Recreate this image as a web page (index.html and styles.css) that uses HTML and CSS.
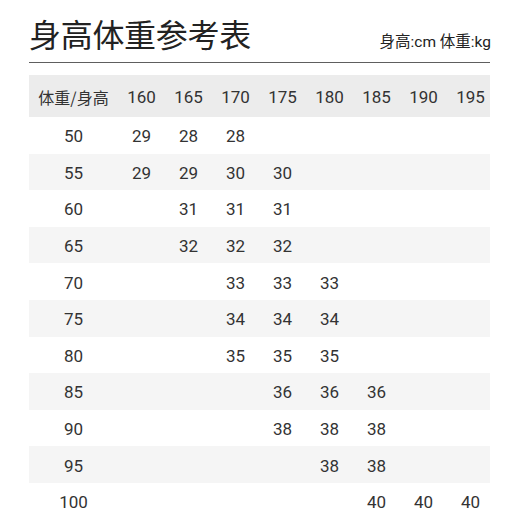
FILE: index.html
```html
<!DOCTYPE html>
<html lang="zh">
<head>
<meta charset="utf-8">
<link rel="stylesheet" href="styles.css">
</head>
<body>
<div class="page">
  <div class="head">
    <h1 class="title">身高体重参考表</h1>
    <div class="unit">身高:cm 体重:kg</div>
  </div>
  <div class="rule"></div>
  <div class="table">
    <div class="row hdr"><span class="c1">体重/身高</span><span>160</span><span>165</span><span>170</span><span>175</span><span>180</span><span>185</span><span>190</span><span>195</span></div>
    <div class="row"><span class="c1">50</span><span>29</span><span>28</span><span>28</span><span></span><span></span><span></span><span></span><span></span></div>
    <div class="row alt"><span class="c1">55</span><span>29</span><span>29</span><span>30</span><span>30</span><span></span><span></span><span></span><span></span></div>
    <div class="row"><span class="c1">60</span><span></span><span>31</span><span>31</span><span>31</span><span></span><span></span><span></span><span></span></div>
    <div class="row alt"><span class="c1">65</span><span></span><span>32</span><span>32</span><span>32</span><span></span><span></span><span></span><span></span></div>
    <div class="row"><span class="c1">70</span><span></span><span></span><span>33</span><span>33</span><span>33</span><span></span><span></span><span></span></div>
    <div class="row alt"><span class="c1">75</span><span></span><span></span><span>34</span><span>34</span><span>34</span><span></span><span></span><span></span></div>
    <div class="row"><span class="c1">80</span><span></span><span></span><span>35</span><span>35</span><span>35</span><span></span><span></span><span></span></div>
    <div class="row alt"><span class="c1">85</span><span></span><span></span><span></span><span>36</span><span>36</span><span>36</span><span></span><span></span></div>
    <div class="row"><span class="c1">90</span><span></span><span></span><span></span><span>38</span><span>38</span><span>38</span><span></span><span></span></div>
    <div class="row alt"><span class="c1">95</span><span></span><span></span><span></span><span></span><span>38</span><span>38</span><span></span><span></span></div>
    <div class="row"><span class="c1">100</span><span></span><span></span><span></span><span></span><span></span><span>40</span><span>40</span><span>40</span></div>
  </div>
</div>
</body>
</html>
```
FILE: styles.css
```css
html, body {
  margin: 0;
  padding: 0;
  background: #ffffff;
}
body {
  font-family: Roboto, "Noto Sans CJK SC", sans-serif;
  color: #333333;
  overflow: hidden;
}
.page {
  width: 461px;
  padding: 0 0 0 29px;
}
.head {
  display: flex;
  justify-content: space-between;
  align-items: flex-end;
  height: 54px;
}
.title {
  margin: 0;
  font-family: "Noto Sans CJK SC", sans-serif;
  font-weight: 400;
  font-size: 32px;
  line-height: 32px;
  color: #222222;
  letter-spacing: -0.3px;
  padding-bottom: 5px;
}
.unit {
  font-family: Roboto, "Noto Sans CJK SC", sans-serif;
  font-size: 15.5px;
  line-height: 15px;
  color: #222222;
  padding-bottom: 4px;
  margin-right: -1px;
}
.rule {
  height: 1px;
  background: #5e5e5e;
  margin-top: 8px;
}
.table {
  margin-top: 12px;
}
.row {
  display: grid;
  grid-template-columns: 89px repeat(8, 47px);
  align-items: center;
  height: 36.6px;
  font-size: 17px;
  line-height: 20px;
  width: 461px;
}
.row span {
  text-align: center;
  padding-top: 2px;
}
.row.hdr {
  height: 42px;
  background: #ececec;
}
.row.hdr .c1 {
  font-family: "Noto Sans CJK SC", sans-serif;
  font-size: 16px;
}
.row.alt {
  background: #f5f5f5;
}
```
